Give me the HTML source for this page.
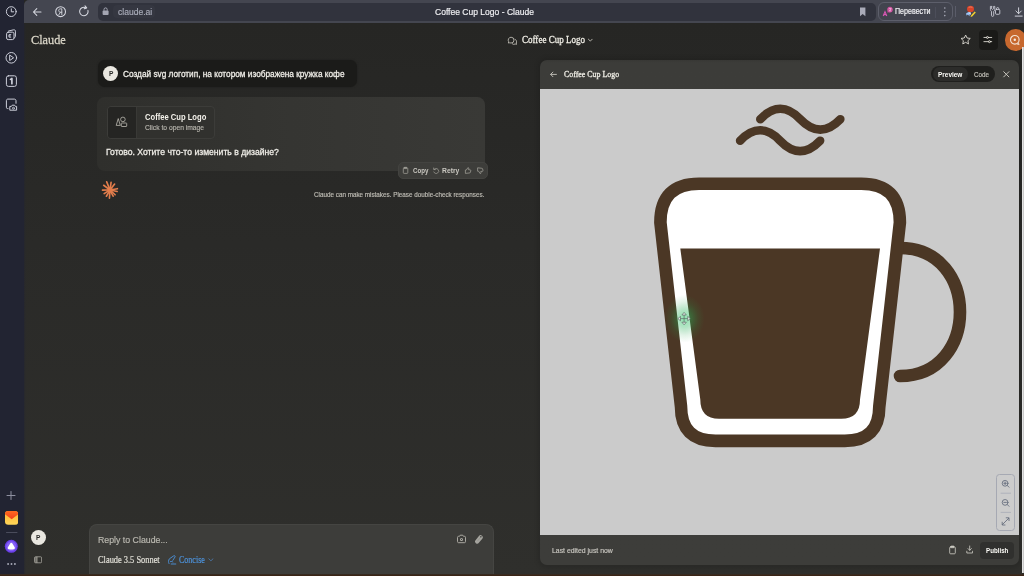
<!DOCTYPE html>
<html><head><meta charset="utf-8">
<style>
*{margin:0;padding:0;box-sizing:border-box}
html,body{width:1024px;height:576px;overflow:hidden;background:#262624}
body{position:relative;font-family:"Liberation Sans",sans-serif;color:#e8e6df}
.abs{position:absolute}
svg.abs,.t{filter:blur(.35px)}
#cup{filter:blur(.5px)}
.t{position:absolute;white-space:nowrap;line-height:1}
.serif{font-family:"Liberation Serif",serif}
.hv{-webkit-text-stroke:0.3px currentColor}
.hv2{-webkit-text-stroke:0.18px currentColor}
#page{left:24px;top:23px;width:1000px;height:551px;background:linear-gradient(180deg,#262624 0%,#2a2a28 40%,#2f2f2c 100%)}
#side{left:0;top:0;width:24px;height:576px;background:#222432}
#sidefade{left:22px;top:24px;width:4px;height:550px;background:linear-gradient(90deg,#222432,rgba(34,36,50,.5) 50%,rgba(34,36,50,0))}
#tb{left:24px;top:0;width:1000px;height:23px;background:#444650;border-top-left-radius:5px}
#url{left:97.500px;top:2.600px;width:778.500px;height:18.100px;background:#31333d;border-radius:5px}
#strip{left:0;top:573.500px;width:1024px;height:2.500px;background:linear-gradient(180deg,#35302b 0%,#3a2618 45%,#3c2414 100%)}
#redge{left:1022px;top:47px;width:2px;height:526px;background:linear-gradient(90deg,#f2f2f2,#bdbdbd)}
</style></head><body>
<div class="abs" id="page"></div>
<div class="abs" id="side"></div>
<div class="abs" id="sidefade"></div>
<div class="abs" id="tb"></div>
<div class="abs" id="url"></div>


<!-- sidebar icons -->
<svg class="abs" style="left:0;top:0" width="24" height="576" viewBox="0 0 24 576" fill="none" stroke="#cdcfda" stroke-width="1.0" stroke-linecap="round" stroke-linejoin="round">
 <circle cx="11.3" cy="11.6" r="4.9"/><path d="M11.3 8.8v3h2.3"/>
 <rect x="6.6" y="32.2" width="7.4" height="7.4" rx="1.6"/><path d="M8.6 31 13.6 29.8c1-.2 1.8.3 1.8 1.4v5.2c0 .8-.4 1.3-1.2 1.5"/><path d="M10.8 34.6H9v2.6h1.8M9 35.9h1.4" stroke-width="0.9"/>
 <circle cx="11.3" cy="57.8" r="5.3"/><path d="M10 55.3l3.6 2.5-3.6 2.5z"/>
 <rect x="6.4" y="75.8" width="10" height="10.6" rx="2"/><path d="M10.5 79.4l1.4-.9v5.200" stroke-width="1.700"/>
 <path d="M8 108.6H7.6c-.8 0-1.2-.5-1.2-1.3v-6.6c0-.9.5-1.6 1.500-1.600h6.500c1 0 1.600.7 1.600 1.600v2.600"/>
 <path d="M10.200 106.400h1.200l.8-1.200h2.400l.8 1.200h1.200v3.800h-6.400z"/><circle cx="13.400" cy="108.200" r="1" stroke-width="0.8"/>
 <path d="M11 491.500v8M7 495.500h8" stroke="#8e90a0"/>
 <path d="M6.500 532.500h10.500" stroke="#4a4c5c" stroke-width="1"/>
</svg>
<!-- mail icon -->
<svg class="abs" style="left:4.700px;top:511.200px" width="13.500" height="14" viewBox="0 0 13.500 14">
 <defs><linearGradient id="mg" x1="0" y1="0" x2="0" y2="1"><stop offset="0" stop-color="#ffb52e"/><stop offset="1" stop-color="#ffd65a"/></linearGradient><linearGradient id="mf" x1="0" y1="0" x2="0" y2="1"><stop offset="0" stop-color="#ff6a1f"/><stop offset="1" stop-color="#f2401c"/></linearGradient></defs>
 <rect x="0" y="0" width="13.300" height="13.800" rx="3.200" fill="url(#mg)"/>
 <path d="M0 3.200a3.200 3.200 0 0 1 3.200-3.200h6.900a3.200 3.200 0 0 1 3.200 3.200L6.650 8.200z" fill="url(#mf)"/>
</svg>
<!-- alice icon -->
<svg class="abs" style="left:4.200px;top:538.800px" width="15" height="15" viewBox="0 0 15 15">
 <circle cx="7.300" cy="7.300" r="6.500" fill="#6b40ea"/><circle cx="7.300" cy="7.300" r="5" fill="#8460f6"/>
 <path d="M7.300 3.700c.5 0 .8.200 1.100.700l2.300 3.900c.5.900 0 1.700-1 1.900-1.600.300-3.200.300-4.800 0-1-.2-1.500-1-1-1.900l2.300-3.900c.300-.5.600-.7 1.100-.7z" fill="#fff"/>
</svg>
<svg class="abs" style="left:6px;top:561.500px" width="12" height="4" viewBox="0 0 12 4" fill="#a7a9b8"><circle cx="2.100" cy="2" r=".95"/><circle cx="5.500" cy="2" r=".95"/><circle cx="8.900" cy="2" r=".95"/></svg>

<!-- toolbar icons -->
<svg class="abs" style="left:24px;top:0" width="140" height="23" viewBox="24 0 140 23" fill="none" stroke="#d6d8e0" stroke-width="1.05" stroke-linecap="round" stroke-linejoin="round">
 <path d="M41 12H33.600M36.800 8.600L33.400 12l3.400 3.400"/>
 <circle cx="60.600" cy="11.700" r="4.900"/><path d="M61.800 14.600V8.800h-1.300c-1.100 0-1.800.7-1.800 1.700s.7 1.700 1.800 1.700h1.300M60.400 12.300l-1.500 2.300" stroke-width="0.900"/>
 <path d="M87.900 10.400a4.200 4.200 0 1 1-2.300-2.700"/><path d="M85 5.800l1.700 2.100-2.500.9" />
</svg>
<div class="abs" style="left:112.800px;top:5.400px;width:42.600px;height:13px;border-radius:4px;background:#353741"></div>
<svg class="abs" style="left:102.400px;top:7px" width="8" height="10" viewBox="0 0 8 10"><rect x=".6" y="3.500" width="6" height="4.400" rx=".9" fill="#a4a6b3"/><path d="M2 3.700V2.500a1.600 1.600 0 0 1 3.200 0v1.200" fill="none" stroke="#a4a6b3" stroke-width="1"/></svg>
<div class="t hv2" id="t_url" style="left:117.70px;top:7.98px;font-size:9.3px;color:#a9acb9;letter-spacing:0px;transform:scaleX(0.9189);transform-origin:0 0">claude.ai</div>
<div class="t hv2" id="t_title" style="left:435.20px;top:6.50px;font-size:9.8px;color:#f1f1f4;letter-spacing:0px;transform:scaleX(0.8702);transform-origin:0 0">Coffee Cup Logo - Claude</div>
<!-- bookmark -->
<svg class="abs" style="left:859px;top:7px" width="8" height="10" viewBox="0 0 8 10"><path d="M1 .6h5.400v8.600L3.700 7 1 9.200z" fill="#a9abb8"/></svg>
<!-- translate pill -->
<div class="abs" style="left:878px;top:2px;width:75.200px;height:19px;border:1px solid #5d5f6b;border-radius:6px;background:#42444e"></div>
<svg class="abs" style="left:882px;top:5.600px" width="12" height="12" viewBox="0 0 12 12"><path d="M1.2 10L3 5.600l1.800 4.400M1.800 8.600h2.400" fill="none" stroke="#d957b4" stroke-width="1.100"/><path d="M5.200 3.600c0-1.700 1.200-2.800 2.800-2.800s2.800 1.100 2.800 2.800-1.200 3-2.800 3c-.6 0-1.100-.1-1.500-.4l-1.300.4.400-1.300c-.3-.5-.4-1-.4-1.700z" fill="#d0509f"/><path d="M6.800 2.600h2.600M8.100 2v.6M7 5.200c1-.4 1.700-1.200 2-2.500M7.200 3.800c.4.700 1.100 1.200 2 1.400" stroke="#f7d4ea" stroke-width=".55" fill="none"/></svg>
<div class="t hv2" id="t_tr" style="left:894.70px;top:6.97px;font-size:8.3px;color:#f4f4f7;letter-spacing:0px;transform:scaleX(0.8566);transform-origin:0 0">Перевести</div>
<div class="abs" style="left:935px;top:6.500px;width:1px;height:11px;background:#4c4e5a"></div>
<svg class="abs" style="left:943px;top:6px" width="4" height="12" viewBox="0 0 4 12" fill="#a9abb8"><circle cx="1.800" cy="2" r=".8"/><circle cx="1.800" cy="5.800" r=".8"/><circle cx="1.800" cy="9.600" r=".8"/></svg>
<div class="abs" style="left:955px;top:6px;width:1px;height:11px;background:#5a5c69"></div>
<!-- ext icon colourful -->
<svg class="abs" style="left:965px;top:5px" width="14" height="14" viewBox="965 5 14 14"><ellipse cx="970.500" cy="8.900" rx="3.500" ry="3.200" fill="#d9442a"/><path d="M968.600 7.600c1.200-.8 2.600-.8 3.800 0" stroke="#f08a6c" stroke-width=".9" fill="none"/><path d="M966.200 13.200l2.400-1.200 1.400 1-.6 3.200-1.400-1.600-1.600 1z" fill="#9cc3f5"/><path d="M968.800 12.200l2.200.4-.6 2.600z" fill="#eef3fb"/><path d="M971 15.400l3.600-3.800 1.200 1-3.600 3.800-1.600.5z" fill="#f2cf2e"/></svg>
<!-- puzzle -->
<svg class="abs" style="left:988px;top:5px" width="14" height="14" viewBox="988 5 14 14" fill="none" stroke="#d0d1da" stroke-width=".85" stroke-linejoin="round" stroke-linecap="round"><path d="M991.600 6.400H990.400V9.400Q990.400 10.800 991.500 11.400V15.300Q991.500 16.400 992.600 16.400Q993.700 16.400 993.700 15.300V11.400Q994.800 10.800 994.800 9.400V6.400H993.600V8.600L992.600 9.400L991.600 8.600Z"/><rect x="995.500" y="9.400" width="4.300" height="4.900" rx="1"/><path d="M996.500 9.400v-.7a1.150 1.150 0 0 1 2.300 0v.7"/><rect x="996.700" y="11.200" width="1.900" height="1.600" fill="#2b2c36" stroke="none"/></svg>
<!-- download -->
<svg class="abs" style="left:1013px;top:5px" width="12" height="14" viewBox="1013 5 12 14" fill="none" stroke="#d6d7df" stroke-width=".95" stroke-linecap="round" stroke-linejoin="round"><path d="M1018.600 7.800v5.800M1015.900 11l2.700 2.700 2.700-2.700M1015.200 16.100h7"/></svg>

<!-- chat column -->

<div class="t serif hv" id="t_logo" style="left:31.25px;top:33.26px;font-size:13.3px;color:#d8d4c6;letter-spacing:0px;transform:scaleX(0.9224);transform-origin:0 0">Claude</div>

<!-- user bubble -->
<div class="abs" style="left:98px;top:60.400px;width:259.200px;height:26.700px;border-radius:7px;background:#1b1b19;box-shadow:0 0 2px #1d1d1b"></div>
<div class="abs" style="left:103px;top:66.400px;width:15px;height:15px;border-radius:50%;background:#e9e7e0"></div>
<div class="t" id="t_p1" style="left:108.80px;top:71.31px;font-size:6.6px;font-weight:bold;color:#2a2a28;letter-spacing:0px;transform:scaleX(0.9986);transform-origin:0 0">P</div>
<div class="t hv" id="t_user" style="left:122.80px;top:69.06px;font-size:9.5px;color:#f0eee8;letter-spacing:0px;transform:scaleX(0.8699);transform-origin:0 0">Создай svg логотип, на котором изображена кружка кофе</div>

<!-- assistant bubble -->
<div class="abs" style="left:97.200px;top:97px;width:387.800px;height:74.200px;border-radius:8px;background:linear-gradient(90deg,#2f2f2c 0%,#353532 50%,#393936 100%)"></div>
<!-- artifact card -->
<div class="abs" style="left:107px;top:105.500px;width:107.500px;height:33.500px;border:1px solid #3c3c39;border-radius:4px;background:#31312e;overflow:hidden"><div style="position:absolute;left:0;top:0;width:28.500px;height:100%;background:#252523;border-right:1px solid #393936"></div></div>
<svg class="abs" style="left:114.500px;top:116px" width="14" height="12" viewBox="0 0 14 12" fill="none" stroke="#b3b1a9" stroke-width=".85" stroke-linejoin="round"><path d="M3.250 2.600L5.300 9.400H1.200z"/><circle cx="7.900" cy="3.400" r="2.300"/><rect x="6.300" y="7" width="5.400" height="3.500" rx=".5"/></svg>
<div class="t" id="t_card1" style="left:145.30px;top:112.70px;font-size:8.5px;font-weight:bold;color:#f3f1ea;letter-spacing:0px;transform:scaleX(0.8953);transform-origin:0 0">Coffee Cup Logo</div>
<div class="t hv2" id="t_card2" style="left:145.30px;top:124.44px;font-size:7.4px;color:#b5b3ab;letter-spacing:0px;transform:scaleX(0.9103);transform-origin:0 0">Click to open image</div>
<div class="t hv" id="t_reply" style="left:105.80px;top:147.09px;font-size:9.7px;color:#f0eee8;letter-spacing:0px;transform:scaleX(0.8885);transform-origin:0 0">Готово. Хотите что-то изменить в дизайне?</div>

<!-- action bar -->
<div class="abs" style="left:397.600px;top:162px;width:90.200px;height:17px;border-radius:5px;background:#3d3d3a;border:1px solid #434340"></div>
<svg class="abs" style="left:401px;top:166px" width="86" height="10" viewBox="401 166 86 10" fill="none" stroke="#a3a199" stroke-width=".75" stroke-linecap="round" stroke-linejoin="round">
 <rect x="403.300" y="167.900" width="4.500" height="5.500" rx=".8"/><path d="M404.400 168.200v-.9h2.300v.9z" fill="#a3a199"/>
 <path d="M434.200 169.400a2.500 2.500 0 1 1-.4 2.600"/><path d="M433.700 168v1.600h1.600"/>
 <path d="M465.400 173v-3h1l1.500-2.400c.7 0 1 .5.900 1.100l-.2 1.100h1.400c.6 0 .9.400.8.900l-.4 1.600c-.1.500-.4.700-.9.700z"/>
 <path d="M477.600 168.200v3h1l1.500 2.400c.7 0 1-.5.900-1.100l-.2-1.100h1.400c.6 0 .9-.4.800-.9l-.4-1.600c-.1-.5-.4-.7-.9-.7z"/>
</svg>
<div class="t" id="t_copy" style="left:412.60px;top:167.04px;font-size:7.4px;font-weight:bold;color:#c9c7c0;letter-spacing:0px;transform:scaleX(0.8331);transform-origin:0 0">Copy</div>
<div class="t" id="t_retry" style="left:442.00px;top:167.04px;font-size:7.4px;font-weight:bold;color:#c9c7c0;letter-spacing:0px;transform:scaleX(0.9150);transform-origin:0 0">Retry</div>
<div class="t hv2" id="t_disc" style="left:314.00px;top:191.61px;font-size:6.6px;color:#bcbab2;letter-spacing:0px;transform:scaleX(0.9561);transform-origin:0 0">Claude can make mistakes. Please double-check responses.</div>

<!-- claude spark -->
<svg class="abs" style="left:100.100px;top:179.900px" width="20" height="20" viewBox="-10 -10 20 20" stroke="#e27d4c" stroke-width="1.650" stroke-linecap="round"><circle cx="0" cy="0" r="2.700" fill="#e27d4c" stroke="none"/><path d="M-0.56 -1.39L-3.30 -8.16"/><path d="M0.21 -1.49L1.09 -7.72"/><path d="M0.92 -1.18L4.62 -5.91"/><path d="M1.48 -0.26L7.39 -1.30"/><path d="M1.47 0.31L7.14 1.52"/><path d="M1.10 1.02L5.12 4.77"/><path d="M0.68 1.34L3.13 6.15"/><path d="M-0.10 1.50L-0.57 8.18"/><path d="M-0.75 1.30L-3.60 6.24"/><path d="M-1.27 0.79L-5.85 3.66"/><path d="M-1.50 0.03L-7.50 0.13"/><path d="M-1.20 -0.90L-6.31 -4.75"/></svg>

<!-- input box -->
<div class="abs" style="left:89px;top:523.500px;width:404.500px;height:52px;border-radius:8px 8px 0 0;background:#3d3d3a;border:1px solid #454542;border-bottom:none"></div>
<div class="t hv2" id="t_ph" style="left:98.30px;top:535.40px;font-size:9.8px;color:#bbb9b1;letter-spacing:0px;transform:scaleX(0.8950);transform-origin:0 0">Reply to Claude...</div>
<div class="t serif hv2" id="t_model" style="left:98.30px;top:554.59px;font-size:9.8px;color:#e3e1d9;letter-spacing:0px;transform:scaleX(0.8556);transform-origin:0 0">Claude 3.5 Sonnet</div>
<svg class="abs" style="left:167px;top:555px" width="10" height="10" viewBox="0 0 10 10" fill="none" stroke="#4d93dc" stroke-width=".9" stroke-linecap="round" stroke-linejoin="round"><path d="M2 8.600c-.8-1.600-.6-3.200.4-4.800L6.800.8c.8-.5 1.700.4 1.200 1.200L5.800 5.400"/><path d="M4.200 9h4.600M3.400 6.600c1-.4 2-.2 2.600.6" /></svg>
<div class="t serif hv2" id="t_conc" style="left:178.80px;top:554.59px;font-size:9.8px;color:#4d93dc;letter-spacing:0px;transform:scaleX(0.8174);transform-origin:0 0">Concise</div>
<svg class="abs" style="left:208px;top:558px" width="6" height="4" viewBox="0 0 6 4" fill="none" stroke="#4d7fb8" stroke-width=".8" stroke-linecap="round" stroke-linejoin="round"><path d="M.8.800l2.100 2 2.100-2"/></svg>
<svg class="abs" style="left:456px;top:533px" width="28" height="12" viewBox="456 533 28 12" fill="none" stroke="#b5b3ab" stroke-width=".9" stroke-linecap="round" stroke-linejoin="round">
 <path d="M457.500 537.300c0-.6.400-1 1-1h1l.7-1.100h2.600l.7 1.100h1c.6 0 1 .4 1 1v4.400c0 .6-.4 1-1 1h-6c-.6 0-1-.4-1-1z"/><circle cx="461.500" cy="539.400" r="1.500" fill="#b5b3ab" stroke="none"/><circle cx="461.500" cy="539.400" r=".55" fill="#3d3d3a" stroke="none"/>
 <path d="M477.200 541.500l3.400-4.200" stroke="#a5a49e" stroke-width="4.300"/><path d="M477.600 541l3-3.700" stroke="#8c8b86" stroke-width=".6"/><circle cx="480.900" cy="536.700" r=".75" fill="#3d3d3a" stroke="none"/>
</svg>

<!-- bottom-left avatar & toggle -->
<div class="abs" style="left:30.500px;top:530px;width:15px;height:15px;border-radius:50%;background:#e9e7e0"></div>
<div class="t" id="t_p2" style="left:36.00px;top:535.41px;font-size:6.6px;font-weight:bold;color:#2a2a28;letter-spacing:0px;transform:scaleX(0.9986);transform-origin:0 0">P</div>
<svg class="abs" style="left:34px;top:556px" width="9" height="8" viewBox="0 0 9 8" fill="none" stroke="#a9a79f" stroke-width=".8"><rect x=".6" y=".8" width="7" height="6" rx="1"/><path d="M3 .8v6"/><rect x=".6" y=".8" width="2.400" height="6" fill="#a9a79f" opacity=".5" stroke="none"/></svg>

<!-- artifact panel -->

<!-- page header right -->
<svg class="abs" style="left:506.900px;top:35.700px" width="10.600" height="9.700" viewBox="0 0 12 11" fill="none" stroke="#bfbdb5" stroke-width="1" stroke-linejoin="round"><path d="M4.600 1.400a3.300 3.300 0 0 1 3.300 3.300 3.300 3.300 0 0 1-3.300 3.300c-.5 0-1-.1-1.500-.3L1.500 8l.4-1.500A3.300 3.300 0 0 1 4.600 1.400z"/><path d="M8.600 3.600a3 3 0 0 1 1.900 4.400l.4 1.500-1.600-.4a3 3 0 0 1-3.700-.6"/></svg>
<div class="t serif hv" id="t_ptitle" style="left:521.70px;top:34.47px;font-size:10.9px;color:#f0eee6;font-weight:normal;letter-spacing:0px;transform:scaleX(0.8286);transform-origin:0 0">Coffee Cup Logo</div>
<svg class="abs" style="left:587px;top:37.900px" width="7" height="5" viewBox="0 0 7 5" fill="none" stroke="#c4c2ba" stroke-width=".9" stroke-linecap="round" stroke-linejoin="round"><path d="M1.400 1.200l1.900 1.900 1.900-1.900"/></svg>
<svg class="abs" style="left:959.900px;top:33.700px" width="11.300" height="11.300" viewBox="0 0 13 13" fill="none" stroke="#dddbd3" stroke-width="1.050" stroke-linejoin="round"><path d="M6.500 1.200l1.600 3.400 3.700.5-2.700 2.600.7 3.700-3.300-1.800-3.300 1.800.7-3.700L1.200 5.100l3.700-.5z"/></svg>
<div class="abs" style="left:978.800px;top:29.700px;width:19px;height:20px;border-radius:4px;background:#1a1a18"></div>
<svg class="abs" style="left:983.400px;top:35.200px" width="10" height="9.100" viewBox="0 0 11 10" fill="none" stroke="#e4e2da" stroke-width=".95" stroke-linecap="round"><path d="M1 2.700h2.800M6 2.700H9.600M1 7.300h5M8.200 7.300h1.400"/><circle cx="4.900" cy="2.700" r="1.100"/><circle cx="7.100" cy="7.300" r="1.100"/></svg>
<div class="abs" style="left:1004.800px;top:29.400px;width:21.200px;height:21.200px;border-radius:50%;background:#c7682e"></div>
<svg class="abs" style="left:1008px;top:33px" width="14" height="14" viewBox="0 0 14 14" fill="none" stroke="#f3e3d6" stroke-width="1.100"><circle cx="6.800" cy="6.800" r="4.300"/><path d="M10.200 9.500l.9 2-2.200-.5" stroke-linejoin="round" stroke-width=".9"/><circle cx="6.800" cy="6.800" r="1.200" fill="#f6ece4" stroke="none"/></svg>

<!-- artifact panel -->
<div class="abs" style="left:538px;top:58px;width:484px;height:510px;border-radius:9px;background:rgba(0,0,0,.12);filter:blur(2px)"></div>
<div class="abs" style="left:540.300px;top:60.200px;width:479px;height:504.400px;border-radius:7px;background:linear-gradient(180deg,#383835 0px,#3c3c39 3px,#3d3d3a 100%);overflow:hidden">
 <div class="abs" style="left:0;top:28.600px;width:479.500px;height:446.600px;background:#cbcbcb"></div>
</div>
<svg class="abs" style="left:549px;top:70px" width="9" height="9" viewBox="0 0 9 9" fill="none" stroke="#c9c7bf" stroke-width=".9" stroke-linecap="round" stroke-linejoin="round"><path d="M7.400 4.400H1.800M3.900 2.100L1.600 4.400l2.300 2.300"/></svg>
<div class="t serif hv" id="t_atitle" style="left:564.00px;top:69.96px;font-size:9.0px;color:#f0eee6;font-weight:normal;letter-spacing:0px;transform:scaleX(0.8786);transform-origin:0 0">Coffee Cup Logo</div>
<div class="abs" style="left:931px;top:66.400px;width:64px;height:15.800px;border-radius:8px;background:#1f1f1d"></div>
<div class="abs" style="left:932.500px;top:67.400px;width:35px;height:13.800px;border-radius:7px;background:#2c2c2a"></div>
<div class="t" id="t_prev" style="left:937.80px;top:70.57px;font-size:7.6px;font-weight:bold;color:#fbfaf6;letter-spacing:0px;transform:scaleX(0.8496);transform-origin:0 0">Preview</div>
<div class="t hv2" id="t_code" style="left:974.00px;top:70.57px;font-size:7.6px;color:#c4c2ba;letter-spacing:0px;transform:scaleX(0.8262);transform-origin:0 0">Code</div>
<svg class="abs" style="left:1002px;top:70px" width="9" height="9" viewBox="0 0 9 9" fill="none" stroke="#d6d4cc" stroke-width=".9" stroke-linecap="round"><path d="M1.700 1.700l5.200 5.200M6.900 1.700L1.700 6.900"/></svg>

<!-- coffee svg -->
<svg class="abs" id="cup" style="left:541px;top:89px" width="479" height="446" viewBox="541 89 479 446" fill="none">
 <defs><radialGradient id="glow"><stop offset="0" stop-color="#2fd070" stop-opacity=".55"/><stop offset=".35" stop-color="#25b458" stop-opacity=".36"/><stop offset=".7" stop-color="#22a04a" stop-opacity=".13"/><stop offset="1" stop-color="#22a04a" stop-opacity="0"/></radialGradient></defs>
 <g stroke="#4b3725" stroke-linecap="round" stroke-linejoin="round">
  <path d="M760.300 119.200q20-20.800 40 0t40 0" stroke-width="8.6"/>
  <path d="M740.100 140.700q20-20.800 40 0t40 0" stroke-width="8.6"/>
  <path d="M900 248C980 248 980 376 900 376" stroke-width="12.6"/>
  <path d="M660.4 222.5Q660.4 183.7 699 183.7L861.3 183.7Q899.9 183.7 899.9 222.5L879.3 406.5Q879.3 440.9 844.8 440.9L715.5 440.9Q681 440.9 681 406.5Z" fill="#ffffff" stroke-width="12.6"/>
 </g>
 <path d="M680.3 248.4L880 248.4L860 399.4Q860 418.7 841.3 418.7L719 418.7Q700.3 418.7 700.3 399.4Z" fill="#4b3725"/>
 <ellipse cx="684.6" cy="318.6" rx="20" ry="24" fill="url(#glow)"/>
 <g stroke="#5d6b66" stroke-width=".7" fill="#e9efec" stroke-linejoin="round">
  <path d="M684.100 312.400l2.200 2.600h-4.400z"/><path d="M684.100 324.800l2.200-2.600h-4.400z"/><path d="M677.900 318.600l2.600-2.200v4.400z"/><path d="M690.300 318.600l-2.600-2.200v4.400z"/>
  <path d="M684.100 315v7.200M680.500 318.600h7.200" fill="none"/>
 </g>
</svg>

<!-- zoom controls -->
<div class="abs" style="left:996.400px;top:474px;width:18.400px;height:57px;border:1px solid #a6a9b3;border-radius:3.500px;background:#cccccc"></div>
<svg class="abs" style="left:997px;top:474px" width="18" height="57" viewBox="997 474 18 57" fill="none" stroke="#626a7b" stroke-width=".85" stroke-linecap="round">
 <circle cx="1005.100" cy="483.300" r="2.900"/><path d="M1007.300 485.500l1.700 1.700M1003.800 483.300h2.600M1005.100 482v2.600"/>
 <path d="M1001 493.200h9.600" stroke="#a3a8b5" stroke-width=".7"/>
 <circle cx="1005.100" cy="502.400" r="2.900"/><path d="M1007.300 504.600l1.700 1.700M1003.800 502.400h2.600"/>
 <path d="M1001 512.400h9.600" stroke="#a3a8b5" stroke-width=".7"/>
 <path d="M1002.400 524.600l6.400-6.400M1006.200 517.800h2.800v2.800M1005 525h-2.800v-2.800"/>
</svg>

<!-- panel footer -->
<div class="t hv2" id="t_last" style="left:551.70px;top:547.17px;font-size:7.6px;color:#c9c7c0;letter-spacing:0px;transform:scaleX(0.9058);transform-origin:0 0">Last edited just now</div>
<svg class="abs" style="left:948px;top:545px" width="26" height="10" viewBox="948 545 26 10" fill="none" stroke="#d2d0c8" stroke-width=".8" stroke-linecap="round" stroke-linejoin="round">
 <rect x="949.700" y="546.900" width="5.600" height="6.900" rx=".9"/><path d="M951.100 547.300v-1.200h2.800v1.200z" fill="#d2d0c8"/>
 <path d="M969.700 546v4.200M968 548.600l1.700 1.700 1.700-1.700M966.800 551.200v1.800h5.800v-1.800"/>
</svg>
<div class="abs" style="left:979.500px;top:541.800px;width:34.300px;height:16.800px;border-radius:4px;background:#30302e"></div>
<div class="t" id="t_pub" style="left:985.80px;top:547.17px;font-size:7.6px;font-weight:bold;color:#fbfaf6;letter-spacing:0px;transform:scaleX(0.8164);transform-origin:0 0">Publish</div>


<div class="abs" id="redge"></div>
<div class="abs" id="strip"></div>
</body></html>
